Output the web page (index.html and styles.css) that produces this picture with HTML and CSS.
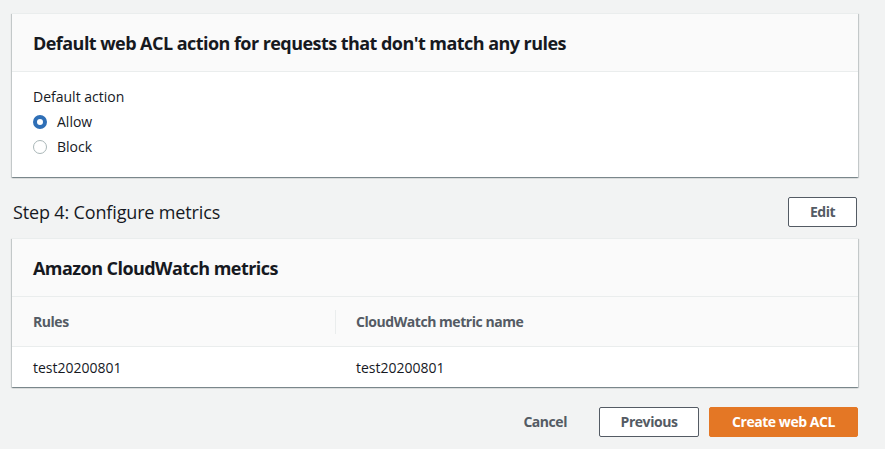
FILE: index.html
```html
<!DOCTYPE html>
<html>
<head>
<meta charset="utf-8">
<link rel="stylesheet" href="styles.css">
</head>
<body>
<div class="page">
  <section class="card">
    <div class="card-header"><h2>Default web ACL action for requests that don't match any rules</h2></div>
    <div class="card-body">
      <div class="field-label">Default action</div>
      <div class="radio-row"><span class="radio checked"></span><span>Allow</span></div>
      <div class="radio-row"><span class="radio"></span><span>Block</span></div>
    </div>
  </section>

  <div class="step-row">
    <h1 class="step-title">Step 4: Configure metrics</h1>
    <button class="btn btn-normal btn-edit">Edit</button>
  </div>

  <section class="card">
    <div class="card-header"><h2>Amazon CloudWatch metrics</h2></div>
    <div class="table">
      <div class="thead">
        <div class="th col1">Rules</div>
        <div class="th col2"><span class="divider"></span>CloudWatch metric name</div>
      </div>
      <div class="trow">
        <div class="td col1">test20200801</div>
        <div class="td col2">test20200801</div>
      </div>
    </div>
  </section>

  <div class="actions">
    <button class="btn btn-link">Cancel</button>
    <button class="btn btn-normal btn-prev">Previous</button>
    <button class="btn btn-primary">Create web ACL</button>
  </div>
</div>
</body>
</html>
```

FILE: styles.css
```css
* { box-sizing: border-box; }
html, body { margin: 0; padding: 0; }
body {
  background: #f2f3f3;
  font-family: "Open Sans", "Noto Sans", Arial, sans-serif;
  font-size: 14px;
  color: #16191f;
  width: 885px;
  height: 449px;
  overflow: hidden;
}
.page {
  padding: 13px 27px 0 12px;
}
.card {
  background: #fff;
  border-top: 1px solid #eaeded;
  box-shadow: 0 1px 1px 0 rgba(0,28,36,.3), 1px 1px 1px 0 rgba(0,28,36,.15), -1px 1px 1px 0 rgba(0,28,36,.15);
}
.card-header {
  background: #fafafa;
  padding: 18px 20px 17px 21px;
  border-bottom: 1px solid #eaeded;
}
.card-header h2 {
  margin: 0;
  font-size: 18px;
  line-height: 22px;
  font-weight: 700;
  letter-spacing: -0.55px;
}
.card-body {
  padding: 14px 20px 18px 21px;
}
.field-label {
  line-height: 22px;
  margin-bottom: 1px;
}
.radio-row {
  display: flex;
  align-items: center;
  height: 25px;
  gap: 10px;
}
.radio {
  width: 14px;
  height: 14px;
  border-radius: 50%;
  border: 1.5px solid #aab7b8;
  background: #fff;
  flex: none;
}
.radio.checked {
  border: 4px solid #2f6fb6;
}
.step-row {
  display: flex;
  align-items: center;
  justify-content: space-between;
  margin-top: 20px;
  margin-bottom: 11px;
  padding-left: 1px;
}
.step-title {
  margin: 0;
  font-size: 18px;
  line-height: 22px;
  font-weight: 400;
  letter-spacing: -0.15px;
}
.btn {
  font-family: inherit;
  font-size: 14px;
  font-weight: 700;
  line-height: 20px;
  letter-spacing: -0.45px;
  border-radius: 2px;
  cursor: pointer;
  white-space: nowrap;
}
.btn-normal {
  background: #fff;
  color: #545b64;
  border: 1px solid #545b64;
  height: 30px;
  padding: 3px 10px;
}
.btn-edit {
  width: 69px;
  margin-right: 1px;
}
.table {
  font-size: 14px;
}
.thead, .trow {
  display: flex;
}
.thead {
  background: #fafafa;
  border-bottom: 1px solid #eaeded;
  height: 50px;
  align-items: center;
  color: #545b64;
  font-weight: 700;
  letter-spacing: -0.45px;
}
.trow {
  height: 40px;
  align-items: center;
}
.col1 {
  width: 323px;
  padding-left: 21px;
}
.col2 {
  flex: 1;
  padding-left: 21px;
  position: relative;
}
.divider {
  position: absolute;
  left: 0;
  top: -2px;
  width: 1px;
  height: 24px;
  background: #eaeded;
}
.actions {
  display: flex;
  justify-content: flex-end;
  align-items: center;
  margin-top: 20px;
}
.btn-link {
  background: transparent;
  border: none;
  color: #545b64;
  height: 30px;
  padding: 3px 10px;
  margin-right: 22px;
}
.btn-prev {
  width: 100px;
  margin-right: 10px;
}
.btn-primary {
  background: #e47725;
  border: 1px solid #e47725;
  color: #fff;
  height: 30px;
  width: 149px;
  padding: 3px 10px;
}
```
